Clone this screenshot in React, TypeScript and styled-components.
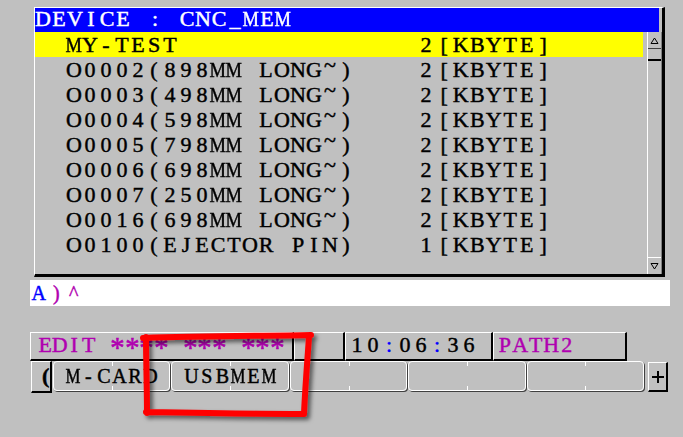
import React from "react";
import styled, { createGlobalStyle } from "styled-components";

const GlobalStyle = createGlobalStyle`
  html, body {
    margin: 0;
    padding: 0;
    width: 683px;
    height: 437px;
    overflow: hidden;
    background: #c0c0c0;
  }
  #root { width: 683px; height: 437px; }
  *, *::before, *::after { box-sizing: border-box; }
`;

const FONT = `"Liberation Serif", "Times New Roman", serif`;
const PURPLE = "#b000b0";
const BLUE = "#0000ff";

const Screen = styled.div`
  position: relative;
  width: 683px;
  height: 437px;
  padding: 7px 0 0 30px;
  background: #c0c0c0;
  font-family: ${FONT};
  -webkit-text-stroke: 0.45px currentColor;
  color: #000;
  white-space: nowrap;
`;

type GlyphKind = "plain" | "wide" | "star" | "tilde";

const glyphTransform: Record<GlyphKind, string> = {
  plain: "none",
  wide: "scaleX(0.84)",
  star: "translateY(0.12em) scale(1.3)",
  tilde: "translateY(-0.22em)",
};

/* one character of the CNC fixed character grid */
const Cell = styled.span<{ $pitch: number }>`
  display: inline-flex;
  justify-content: center;
  width: ${(p) => p.$pitch}px;
`;

const Glyph = styled.span<{ $kind: GlyphKind }>`
  display: inline-block;
  transform: ${(p) => glyphTransform[p.$kind]};
`;

const kindOf = (c: string): GlyphKind =>
  c === "M" || c === "W" ? "wide" : c === "*" ? "star" : c === "~" ? "tilde" : "plain";

const Chars = ({ text, pitch }: { text: string; pitch: number }) => (
  <>
    {Array.from(text).map((c, i) => (
      <Cell key={i} $pitch={pitch}>
        <Glyph $kind={kindOf(c)}>{c === " " ? "\u00a0" : c}</Glyph>
      </Cell>
    ))}
  </>
);

const Tint = styled.span<{ $color: string }>`
  color: ${(p) => p.$color};
`;

const Panel = styled.section`
  margin-left: 4px;
  width: 631px;
  height: 270px;
  display: flex;
  flex-direction: column;
  border-top: 1px solid #fff;
  border-left: 1px solid #fff;
  border-right: 3px solid #000;
  border-bottom: 3px solid #000;
`;

const Header = styled.div`
  height: 24px;
  margin-right: 3px;
  background: ${BLUE};
  color: #fff;
  font-size: 22px;
  line-height: 22px;
`;

const Body = styled.div`
  flex: 1;
  min-height: 0;
  display: flex;
  gap: 4px;
`;

const List = styled.ul`
  list-style: none;
  margin: 0;
  padding: 0;
  width: 608px;
`;

const Row = styled.li<{ $selected?: boolean }>`
  display: grid;
  grid-template-columns: 352px 16px 120px;
  height: 25px;
  padding-left: 31px;
  font-size: 22px;
  line-height: 25px;
  background: ${(p) => (p.$selected ? "#ffff00" : "transparent")};
`;

const Unit = styled.span`
  padding-left: 2px;
`;

const ScrollBar = styled.div`
  width: 15px;
  display: flex;
  flex-direction: column;
  padding: 1px 0;
  border-left: 1px solid #fff;
  border-right: 1px solid #808080;
`;

const ScrollButton = styled.div<{ $down?: boolean }>`
  height: 16px;
  display: flex;
  align-items: center;
  justify-content: center;
  ${(p) =>
    p.$down
      ? "border-top: 1px solid #fff;"
      : "border-bottom: 1px solid #404040;"}
`;

const Thumb = styled.div`
  height: 12px;
  border-bottom: 2px solid #000;
`;

const Track = styled.div`
  flex: 1;
`;

const InputLine = styled.div`
  margin-top: 3px;
  width: 640px;
  height: 26px;
  padding-top: 2px;
  background: #fff;
  font-size: 20px;
  line-height: 22px;
`;

const StatusBar = styled.div`
  margin-top: 26px;
  height: 29px;
  display: flex;
`;

const StatusCell = styled.div<{ $width: number; $pad: number }>`
  width: ${(p) => p.$width}px;
  height: 29px;
  padding-left: ${(p) => p.$pad}px;
  border-top: 1px solid #fff;
  border-left: 1px solid #fff;
  border-right: 2px solid #000;
  border-bottom: 2px solid #000;
  font-size: 22px;
  line-height: 23px;
`;

const KeyRow = styled.div`
  height: 32px;
  display: flex;
  align-items: flex-start;
`;

const NavButton = styled.div`
  margin-left: 1px;
  width: 21px;
  height: 32px;
  padding-left: 10px;
  border-top: 1px solid #fff;
  border-left: 1px solid #fff;
  border-right: 2px solid #000;
  border-bottom: 2px solid #000;
  font-size: 22px;
  font-weight: bold;
  line-height: 28px;
`;

const SoftKeys = styled.div`
  margin-left: 1px;
  width: 591px;
  height: 30px;
  display: flex;
  gap: 1px;
`;

const SoftKey = styled.div`
  position: relative;
  flex: 1;
  height: 30px;
  display: flex;
  justify-content: center;
  border: 1px solid #fff;
  border-radius: 4px;
  box-shadow: 1px 1px 0 #404040;
  font-size: 20px;
  line-height: 28px;

  &::before,
  &::after {
    content: "";
    position: absolute;
    left: 50%;
    width: 1px;
    height: 4px;
    background: #fff;
  }
  &::before { top: 0; }
  &::after { bottom: 0; }
`;

const PlusButton = styled.div`
  margin: 1px 0 0 4px;
  width: 20px;
  height: 30px;
  display: flex;
  align-items: center;
  justify-content: center;
  border-top: 1px solid #fff;
  border-left: 1px solid #fff;
  border-right: 2px solid #000;
  border-bottom: 2px solid #000;
`;

const Annotation = styled.svg`
  position: absolute;
  left: 0;
  top: 0;
  pointer-events: none;
`;

const files = [
  { name: "MY-TEST", size: "2", selected: true },
  { name: "O0002(898MM LONG~)", size: "2" },
  { name: "O0003(498MM LONG~)", size: "2" },
  { name: "O0004(598MM LONG~)", size: "2" },
  { name: "O0005(798MM LONG~)", size: "2" },
  { name: "O0006(698MM LONG~)", size: "2" },
  { name: "O0007(250MM LONG~)", size: "2" },
  { name: "O0016(698MM LONG~)", size: "2" },
  { name: "O0100(EJECTOR PIN)", size: "1" },
];

const softKeys = ["M-CARD", "USBMEM", "", "", ""];

const Triangle = ({ down }: { down?: boolean }) => (
  <svg width="9" height="8" viewBox="0 0 9 8">
    <polygon
      points={down ? "1,1.5 8,1.5 4.5,7" : "4.5,1 8,6.5 1,6.5"}
      fill="none"
      stroke="#000"
      strokeWidth="1"
    />
  </svg>
);

const Plus = () => (
  <svg width="14" height="14" viewBox="0 0 14 14">
    <path d="M7 1V13M1 7H13" stroke="#000" strokeWidth="2" />
  </svg>
);

export default function App() {
  return (
    <>
      <GlobalStyle />
      <Screen>
        <Panel>
          <Header>
            <Chars text="DEVICE : CNC_MEM" pitch={16} />
          </Header>
          <Body>
            <List>
              {files.map((f) => (
                <Row key={f.name} $selected={f.selected}>
                  <span>
                    <Chars text={f.name} pitch={16} />
                  </span>
                  <span>
                    <Chars text={f.size} pitch={16} />
                  </span>
                  <Unit>
                    <Chars text="[KBYTE]" pitch={16.5} />
                  </Unit>
                </Row>
              ))}
            </List>
            <ScrollBar>
              <ScrollButton>
                <Triangle />
              </ScrollButton>
              <Thumb />
              <Track />
              <ScrollButton $down>
                <Triangle down />
              </ScrollButton>
            </ScrollBar>
          </Body>
        </Panel>

        <InputLine>
          <Tint $color={BLUE}>
            <Chars text="A" pitch={17.5} />
          </Tint>
          <Tint $color={PURPLE}>
            <Chars text=")^" pitch={17.5} />
          </Tint>
        </InputLine>

        <StatusBar>
          <StatusCell $width={264} $pad={7}>
            <Tint $color={PURPLE}>
              <Chars text="EDIT **** *** ***" pitch={14.5} />
            </Tint>
          </StatusCell>
          <StatusCell $width={51} $pad={4} />
          <StatusCell $width={148} $pad={3}>
            <Chars text="10" pitch={16} />
            <Tint $color={BLUE}>
              <Chars text=":" pitch={16} />
            </Tint>
            <Chars text="06" pitch={16} />
            <Tint $color={BLUE}>
              <Chars text=":" pitch={16} />
            </Tint>
            <Chars text="36" pitch={16} />
          </StatusCell>
          <StatusCell $width={134} $pad={3}>
            <Tint $color={PURPLE}>
              <Chars text="PATH2" pitch={15.5} />
            </Tint>
          </StatusCell>
        </StatusBar>

        <KeyRow>
          <NavButton>(</NavButton>
          <SoftKeys>
            {softKeys.map((k, i) => (
              <SoftKey key={i}>
                <Chars text={k} pitch={15.5} />
              </SoftKey>
            ))}
          </SoftKeys>
          <PlusButton>
            <Plus />
          </PlusButton>
        </KeyRow>

        <Annotation width="683" height="437" viewBox="0 0 683 437">
          <defs>
            <filter id="markShadow" x="-20%" y="-20%" width="140%" height="140%">
              <feDropShadow dx="3" dy="3" stdDeviation="2" floodColor="#000" floodOpacity="0.55" />
            </filter>
          </defs>
          <path
            d="M143 338 C 200 336, 260 336, 311 335 M309 337 C 307 365, 305 390, 304 414 M146 412 C 200 413, 260 414, 304 414 M146 337 C 146 360, 147 390, 147 413"
            stroke="#ff0000"
            strokeWidth="6"
            strokeLinecap="round"
            fill="none"
            filter="url(#markShadow)"
          />
        </Annotation>
      </Screen>
    </>
  );
}
